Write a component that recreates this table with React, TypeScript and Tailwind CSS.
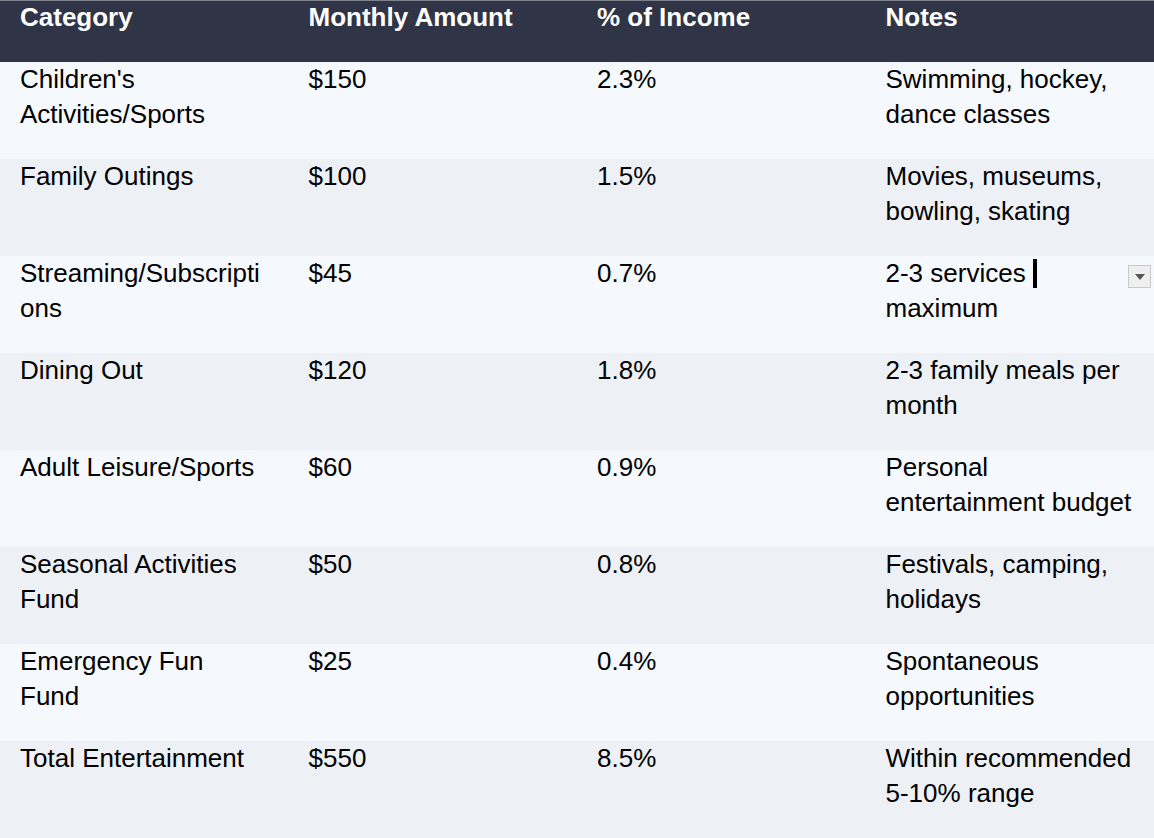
const rows = [
  { category: "Children's Activities/Sports", amount: "$150", pct: "2.3%", notes: "Swimming, hockey, dance classes" },
  { category: "Family Outings", amount: "$100", pct: "1.5%", notes: "Movies, museums, bowling, skating" },
  { category: "Streaming/Subscriptions", amount: "$45", pct: "0.7%", notes: "2-3 services maximum", active: true },
  { category: "Dining Out", amount: "$120", pct: "1.8%", notes: "2-3 family meals per month" },
  { category: "Adult Leisure/Sports", amount: "$60", pct: "0.9%", notes: "Personal entertainment budget" },
  { category: "Seasonal Activities Fund", amount: "$50", pct: "0.8%", notes: "Festivals, camping, holidays" },
  { category: "Emergency Fun Fund", amount: "$25", pct: "0.4%", notes: "Spontaneous opportunities" },
  { category: "Total Entertainment", amount: "$550", pct: "8.5%", notes: "Within recommended 5-10% range" },
];

const headers = ["Category", "Monthly Amount", "% of Income", "Notes"];

export default function App() {
  return (
    <div className="min-h-screen bg-white font-['Liberation_Sans',Arial,sans-serif] text-[26px] leading-[35px] text-black">
      <div className="border-t border-[#7c818b]">
        {/* header */}
        <div className="grid h-[61px] grid-cols-4 bg-[#2f3546] text-white">
          {headers.map((h) => (
            <div key={h} className="px-5 font-bold leading-[32px]">
              {h}
            </div>
          ))}
        </div>

        {rows.map((r, i) => (
          <div
            key={r.category}
            className={`grid h-[97px] grid-cols-4 ${i % 2 === 0 ? "bg-[#f5f8fc]" : "bg-[#edf0f5]"}`}
          >
            <div className="px-5 [overflow-wrap:anywhere]">{r.category}</div>
            <div className="px-5">{r.amount}</div>
            <div className="px-5">{r.pct}</div>
            <div className="relative px-5">
              {r.active ? (
                <>
                  2-3 services{" "}
                  <span className="inline-block h-[29px] w-[4px] bg-black align-[-6px]" />{" "}
                  maximum
                  <div className="absolute right-[3px] top-[9px] flex h-[23px] w-[23px] items-center justify-center border border-[#c9c9c9] bg-[#efefef]">
                    <svg width="10" height="6" viewBox="0 0 10 6">
                      <path d="M0 0h10L5 6z" fill="#555" />
                    </svg>
                  </div>
                </>
              ) : (
                r.notes
              )}
            </div>
          </div>
        ))}
      </div>
    </div>
  );
}
